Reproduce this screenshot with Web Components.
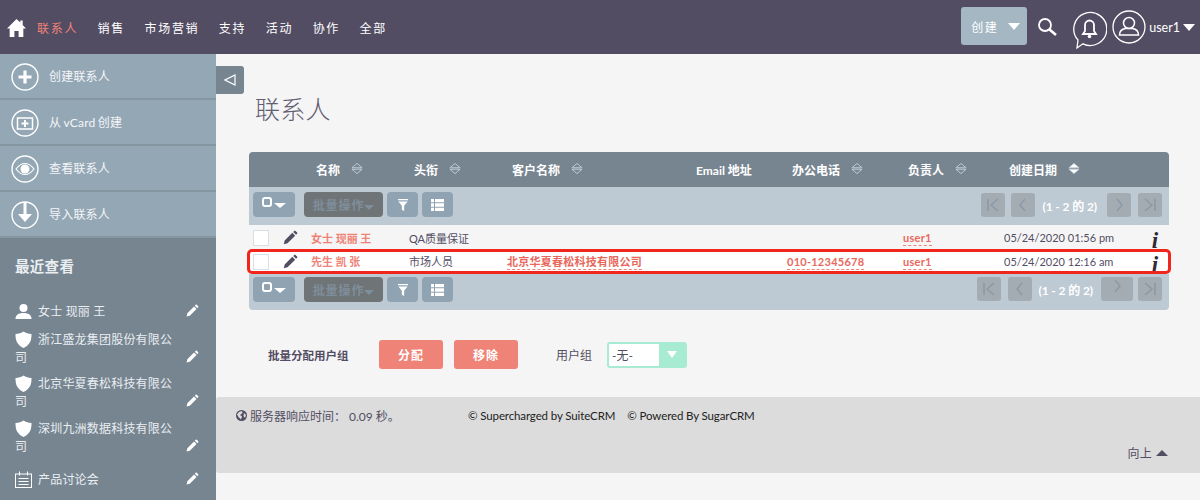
<!DOCTYPE html>
<html lang="zh">
<head>
<meta charset="utf-8">
<title>联系人</title>
<style>
  html, body { margin: 0; height: 500px; overflow: hidden; }
  body {
    font-family: Lato, "Noto Sans CJK SC", sans-serif;
    font-size: 12px;
    color: #534d64;
    background: #f5f5f5;
  }
  crm-app { height: 500px; }
</style>
</head>
<body>
<crm-app>
  <crm-topbar slot="top"></crm-topbar>
  <crm-sidebar slot="side">
    <crm-side-action icon="plus">创建联系人</crm-side-action>
    <crm-side-action icon="card">从 vCard 创建</crm-side-action>
    <crm-side-action icon="eye">查看联系人</crm-side-action>
    <crm-side-action icon="import">导入联系人</crm-side-action>
    <crm-recent-item slot="recent" icon="person">女士 现丽 王</crm-recent-item>
    <crm-recent-item slot="recent" icon="shield" style="margin-top:1px">浙江盛龙集团股份有限公司</crm-recent-item>
    <crm-recent-item slot="recent" icon="shield">北京华夏春松科技有限公司</crm-recent-item>
    <crm-recent-item slot="recent" icon="shield">深圳九洲数据科技有限公司</crm-recent-item>
    <crm-recent-item slot="recent" icon="calendar" style="margin-top:7px">产品讨论会</crm-recent-item>
  </crm-sidebar>
  <crm-contacts slot="main"></crm-contacts>
</crm-app>

<script>
const pencilPath = 'M2 16l1-4.2L11.6 3.2l3.2 3.2L6.2 15z M12.6 2.2l1.2-1.2a1 1 0 0 1 1.4 0l1.8 1.8a1 1 0 0 1 0 1.4l-1.2 1.2z';

const sideIcons = {
  plus: '<circle cx="14" cy="14" r="13" fill="none" stroke="#fff" stroke-width="1.4"/><path d="M14 7.5v13M7.5 14h13" stroke="#fff" stroke-width="3.2"/>',
  card: '<circle cx="14" cy="14" r="13" fill="none" stroke="#fff" stroke-width="1.4"/><rect x="6.5" y="9" width="15" height="11" fill="none" stroke="#fff" stroke-width="1.5"/><path d="M14 11v7M10.5 14.5h7" stroke="#fff" stroke-width="2"/>',
  eye: '<circle cx="14" cy="14" r="13" fill="none" stroke="#fff" stroke-width="1.4"/><path d="M5 14c3-4 6-5.5 9-5.5s6 1.500 9 5.500c-3 4-6 5.500-9 5.500S8 18 5 14z" fill="none" stroke="#fff" stroke-width="1.200"/><circle cx="14" cy="14" r="4.500" fill="#fff"/>',
  import: '<circle cx="14" cy="14" r="13" fill="none" stroke="#fff" stroke-width="1.4"/><path d="M14 1v13" stroke="#fff" stroke-width="3"/><path d="M7 13h14l-7 8z" fill="#fff"/>'
};

const recentIcons = {
  person: '<circle cx="8.500" cy="5" r="4" fill="#fff"/><path d="M0.500 16c0-4 3-6 8-6s8 2 8 6z" fill="#fff"/>',
  shield: '<path d="M8.500 0.500c2 1.500 5 2.500 8 2.500 0 6-1 10.500-8 14-7-3.500-8-8-8-14 3 0 6-1 8-2.500z" fill="#fff"/>',
  calendar: '<rect x="0.500" y="3" width="16" height="13.500" fill="none" stroke="#fff"/><path d="M4.500 0.500v4M12.500 0.500v4M3.500 7.500h10M3.500 10.500h10M3.500 13.500h10" stroke="#fff"/>'
};

class CrmApp extends HTMLElement {
  constructor() {
    super();
    this.attachShadow({ mode: 'open' });
    this.shadowRoot.innerHTML = `
      <style>
        :host {
          display: grid;
          grid-template-columns: 216px 1fr;
          grid-template-rows: 54px 1fr;
          overflow: hidden;
        }
        .top { grid-column: 1 / 3; }
      </style>
      <div class="top"><slot name="top"></slot></div>
      <slot name="side"></slot>
      <slot name="main"></slot>
    `;
  }
}

class CrmTopbar extends HTMLElement {
  constructor() {
    super();
    this.attachShadow({ mode: 'open' });
    const menu = ['销售', '市场营销', '支持', '活动', '协作', '全部'];
    this.shadowRoot.innerHTML = `
      <style>
        :host {
          display: flex;
          align-items: center;
          height: 54px;
          background: #534d64;
          color: #fff;
        }
        .home { margin: 2px 0 0 7px; display: block; }
        nav { display: flex; gap: 19.500px; margin-left: 11px; letter-spacing: 1.7px; font-size: 12px; }
        nav span { white-space: nowrap; }
        nav .active { color: #f08377; }
        .right { margin-left: auto; display: flex; align-items: center; }
        .create {
          width: 66px;
          height: 38px;
          margin-top: -2px;
          background: #a5b7c3;
          border-radius: 3px;
          display: flex;
          align-items: center;
          padding-left: 10px;
          gap: 10px;
          box-sizing: border-box;
          letter-spacing: 1.5px;
        }
        .caret { width: 0; height: 0; border: 6px solid transparent; border-top: 7px solid #fff; border-bottom: 0; }
        .search { margin: 0 0 0 10px; display: block; }
        .bell { margin: 6px 0 0 14px; display: block; }
        .user { margin: 0 0 0 5px; display: block; }
        .name { margin-left: 3px; font-size: 12.500px; }
        .right .caret.small { margin: 0 5px 0 3px; }
      </style>
      <svg class="home" width="19" height="20" viewBox="0 0 20 20" preserveAspectRatio="none">
        <path d="M10 1L0 10.500h2.800V19h5v-6h4.400v6h5v-8.500H20L16.500 7V2.500h-2.500v2z" fill="#fff"/>
      </svg>
      <nav><span class="active">联系人</span>${menu.map(m => `<span>${m}</span>`).join('')}</nav>
      <div class="right">
        <div class="create">创建<span class="caret"></span></div>
        <svg class="search" width="21" height="21" viewBox="0 0 21 21">
          <circle cx="8" cy="8" r="6" fill="none" stroke="#fff" stroke-width="1.800"/>
          <path d="M12.500 12.500l6.500 5.500" stroke="#fff" stroke-width="2.600"/>
        </svg>
        <svg class="bell" width="35" height="39" viewBox="0 0 35 39">
          <path d="M6 29a16.500 16.500 0 1 1 5 3.800L5 37z" fill="none" stroke="#fff" stroke-width="1.300"/>
          <path d="M17.500 9.500a4.500 4.500 0 0 1 4.500 4.500v6l2 3h-13l2-3v-6a4.500 4.500 0 0 1 4.500-4.500z" fill="none" stroke="#fff" stroke-width="1.800"/>
          <circle cx="17.500" cy="25.500" r="1.800" fill="#fff"/>
        </svg>
        <svg class="user" width="34" height="34" viewBox="0 0 34 34">
          <circle cx="17" cy="17" r="16" fill="none" stroke="#fff" stroke-width="1.300"/>
          <circle cx="17" cy="13" r="5.500" fill="none" stroke="#fff" stroke-width="1.500"/>
          <path d="M7.500 25c0-4 3-6 6-6.500h7c3 .5 6 2.500 6 6.500z" fill="none" stroke="#fff" stroke-width="1.500"/>
        </svg>
        <span class="name">user1</span>
        <span class="caret small"></span>
      </div>
    `;
  }
}

class CrmSidebar extends HTMLElement {
  constructor() {
    super();
    this.attachShadow({ mode: 'open' });
    this.shadowRoot.innerHTML = `
      <style>
        :host { display: block; background: #778591; color: #fff; height: 446px; overflow: hidden; }
        h2 { margin: 0; padding: 20px 15px 27px; font-size: 14.500px; line-height: 18px; font-weight: 700; color: #e9eef1; letter-spacing: .3px; }
        .recent { display: flex; flex-direction: column; gap: 8.500px; }
      </style>
      <slot></slot>
      <h2>最近查看</h2>
      <div class="recent"><slot name="recent"></slot></div>
    `;
  }
}

class CrmSideAction extends HTMLElement {
  constructor() {
    super();
    this.attachShadow({ mode: 'open' });
    this.shadowRoot.innerHTML = `
      <style>
        :host {
          display: flex;
          align-items: center;
          gap: 10px;
          height: 46px;
          box-sizing: border-box;
          padding: 0 0 2px 11px;
          background: #94a7b5;
          border-bottom: 2px solid #84969f;
          color: #f4f6f8;
          letter-spacing: .2px;
          word-spacing: -1px;
        }
        svg { display: block; flex: none; margin-top: 3px; }
      </style>
      <svg width="28" height="28" viewBox="0 0 28 28">${sideIcons[this.getAttribute('icon')]}</svg>
      <span><slot></slot></span>
    `;
  }
}

class CrmRecentItem extends HTMLElement {
  constructor() {
    super();
    this.attachShadow({ mode: 'open' });
    this.shadowRoot.innerHTML = `
      <style>
        :host {
          display: flex;
          align-items: flex-end;
          justify-content: space-between;
          padding: 0 17px 0 15px;
          color: #e9eef1;
          line-height: 18px;
          letter-spacing: .2px;
        }
        .text { width: 160px; }
        .text svg { vertical-align: -4px; margin-right: 6px; }
        .pen { display: block; flex: none; margin-bottom: 3px; }
      </style>
      <div class="text"><svg width="17" height="17" viewBox="0 0 17 17">${recentIcons[this.getAttribute('icon')]}</svg><slot></slot></div>
      <svg class="pen" width="14" height="14" viewBox="0 0 18 18"><path d="${pencilPath}" fill="#fff"/></svg>
    `;
  }
}

class CrmToolbar extends HTMLElement {
  constructor() {
    super();
    this.attachShadow({ mode: 'open' });
    const bottom = this.hasAttribute('bottom');
    this.shadowRoot.innerHTML = `
      <style>
        :host {
          display: flex;
          align-items: flex-start;
          height: ${bottom ? 36 : 38}px;
          box-sizing: border-box;
          padding: ${bottom ? 3 : 5}px 7px 0 4px;
          background: #bdc9d3;
          ${bottom ? 'border-radius: 0 0 4px 4px;' : ''}
        }
        .btn {
          height: 25px;
          background: #8fa3b3;
          border-radius: 4px;
          display: flex;
          align-items: center;
          justify-content: center;
          box-sizing: border-box;
          flex: none;
        }
        .check { width: 42px; gap: 2px; padding-bottom: 5px; }
        .box { width: 6px; height: 6px; border: 2px solid #fff; border-radius: 3px; }
        .caret { width: 0; height: 0; border: 5px solid transparent; border-top: 5px solid #fff; border-bottom: 0; margin-top: 5px; }
        .check .caret { border-width: 5px 6px 0; border-color: #fff transparent transparent; margin-top: 7px; }
        .bulk {
          width: 79px;
          margin-left: 9px;
          background: #6f7476;
          color: #7f8e9b;
          font-weight: 700;
          letter-spacing: .9px;
          gap: 0;
        }
        .bulk .caret { border-top-color: #7f8e9b; margin-top: 5px; }
        .icon { width: 31px; margin-left: 4px; }
        .pager { margin-left: auto; display: flex; align-items: center; color: #fff; font-weight: 700; }
        .pg { width: 24px; height: 24px; background: #a3acb3; border-radius: 3px; display: flex; align-items: center; justify-content: center; flex: none; }
        .pg + .pg { margin-left: ${bottom ? 7 : 6}px; }
        .count { margin: 0 ${bottom ? 8 : 10}px 0 ${bottom ? 6 : 7}px; white-space: nowrap; letter-spacing: -.1px; }
        .wide { width: 32px; align-items: flex-start; padding-top: 2px; box-sizing: border-box; }
        .count + .pg + .pg { margin-left: ${bottom ? 5 : 7}px; }
      </style>
      <div class="btn check"><span class="box"></span><span class="caret"></span></div>
      <div class="btn bulk">批量操作<span class="caret"></span></div>
      <div class="btn icon">
        <svg width="10" height="12" viewBox="0 0 13 14" preserveAspectRatio="none"><path d="M0 0h13v1.500H0z M0.500 3h12L8 8v6L5 12.500V8z" fill="#fff"/></svg>
      </div>
      <div class="btn icon">
        <svg width="13" height="12" viewBox="0 0 13 11" preserveAspectRatio="none"><path d="M0 0h3v3H0z M4 0h9v3H4z M0 4h3v3H0z M4 4h9v3H4z M0 8h3v3H0z M4 8h9v3H4z" fill="#fff"/></svg>
      </div>
      <div class="pager" style="margin-top:${bottom ? 0 : 1}px">
        <div class="pg"><svg width="14" height="14" viewBox="0 0 14 14"><path d="M2 1v12M12 1L5 7l7 6" fill="none" stroke="#8c98a3" stroke-width="1.500"/></svg></div>
        <div class="pg"><svg width="14" height="14" viewBox="0 0 14 14"><path d="M9 1L4 7l5 6" fill="none" stroke="#8c98a3" stroke-width="1.500"/></svg></div>
        <span class="count">(1 - 2 的 2)</span>
        <div class="pg ${bottom ? 'wide' : ''}"><svg width="14" height="14" viewBox="0 0 14 14"><path d="M5 1l5 6-5 6" fill="none" stroke="#8c98a3" stroke-width="1.500"/></svg></div>
        <div class="pg"><svg width="14" height="14" viewBox="0 0 14 14"><path d="M12 1v12M2 1l7 6-7 6" fill="none" stroke="#8c98a3" stroke-width="1.500"/></svg></div>
      </div>
    `;
  }
}

class CrmHeaderCell extends HTMLElement {
  constructor() {
    super();
    this.attachShadow({ mode: 'open' });
    const sort = this.getAttribute('sort');
    const fill = sort === 'active' ? '#fff' : 'none';
    const arrows = sort ? `<svg width="12" height="13" viewBox="0 0 13 13">
        <path d="M6.500 1L12 5.700H1z" fill="${fill}" stroke="#c6d0d8"/>
        <path d="M6.500 12L12 7.300H1z" fill="${fill}" stroke="#c6d0d8"/></svg>` : '';
    this.shadowRoot.innerHTML = `
      <style>
        :host { display: flex; align-items: center; gap: 11px; padding-left: 10px; color: #fff; font-weight: 700; white-space: nowrap; }
        svg { display: block; flex: none; margin-top: -2px; }
      </style>
      <span><slot></slot></span>${arrows}
    `;
  }
}

class CrmRow extends HTMLElement {
  constructor() {
    super();
    this.attachShadow({ mode: 'open' });
    const marked = this.hasAttribute('marked');
    this.shadowRoot.innerHTML = `
      <style>
        :host {
          display: grid;
          grid-template-columns: var(--cols);
          align-items: center;
          height: ${marked ? 25 : 24}px;
          background: #f5f5f5;
          color: #534d64;
          font-size: 11px;
          --cell-pad: ${marked ? 2 : 1}px;
          ${marked ? `
          margin: 0 -2px;
          padding: 0 2px;
          background: #fff;
          outline: 3px solid #f0261c;
          outline-offset: -3px;
          border-radius: 5px;` : ''}
        }
        .box { width: 14px; height: 14px; margin-left: 4px; background: #fff; border: 1px solid #d8e0e6; }
        .pen { display: block; margin-left: 3px; }
        .i { font: italic 700 23px/20px "Liberation Serif", serif; text-align: center; color: #2f2c38; padding: 6px 4px 0 0; }
      </style>
      <span class="box"></span>
      <svg class="pen" width="16" height="16" viewBox="0 0 18 18"><path d="${pencilPath}" fill="#534d64"/></svg>
      <slot></slot>
      <span class="i">i</span>
    `;
  }
}

class CrmCell extends HTMLElement {
  constructor() {
    super();
    this.attachShadow({ mode: 'open' });
    const kind = this.getAttribute('kind');
    const styleFor = {
      name: 'color:#f08377;font-weight:700;',
      link: 'color:#e8685c;font-weight:700;letter-spacing:.25px;border-bottom:1px dashed #f08377;'
    };
    this.shadowRoot.innerHTML = `
      <style>
        :host { display: block; padding: 0 0 var(--cell-pad) 5px; white-space: nowrap; }
        span { ${styleFor[kind] || ''} padding-bottom: 1px; }
      </style>
      <span><slot></slot></span>
    `;
  }
}

class CrmListView extends HTMLElement {
  constructor() {
    super();
    this.attachShadow({ mode: 'open' });
    this.shadowRoot.innerHTML = `
      <style>
        :host {
          display: block;
          width: 920px;
          --cols: 30px 27px 98px 98px 189px 91px 116px 101px 146px 24px;
        }
        .head {
          display: grid;
          grid-template-columns: var(--cols);
          align-items: center;
          height: 35px;
          background: #778591;
          border-radius: 4px 4px 0 0;
        }
        .email { padding-left: 5px; }
      </style>
      <div class="head">
        <span></span><span></span>
        <crm-header-cell sort="on">名称</crm-header-cell>
        <crm-header-cell sort="on">头衔</crm-header-cell>
        <crm-header-cell sort="on">客户名称</crm-header-cell>
        <crm-header-cell class="email">Email 地址</crm-header-cell>
        <crm-header-cell sort="on">办公电话</crm-header-cell>
        <crm-header-cell sort="on">负责人</crm-header-cell>
        <crm-header-cell sort="active">创建日期</crm-header-cell>
        <span></span>
      </div>
      <crm-toolbar></crm-toolbar>
      <crm-row>
        <crm-cell kind="name">女士 现丽 王</crm-cell>
        <crm-cell>QA质量保证</crm-cell>
        <crm-cell></crm-cell>
        <crm-cell></crm-cell>
        <crm-cell></crm-cell>
        <crm-cell kind="link">user1</crm-cell>
        <crm-cell>05/24/2020 01:56 pm</crm-cell>
      </crm-row>
      <crm-row marked>
        <crm-cell kind="name">先生 凯 张</crm-cell>
        <crm-cell>市场人员</crm-cell>
        <crm-cell kind="link">北京华夏春松科技有限公司</crm-cell>
        <crm-cell></crm-cell>
        <crm-cell kind="link">010-12345678</crm-cell>
        <crm-cell kind="link">user1</crm-cell>
        <crm-cell>05/24/2020 12:16 am</crm-cell>
      </crm-row>
      <crm-toolbar bottom></crm-toolbar>
    `;
  }
}

class CrmMassAssign extends HTMLElement {
  constructor() {
    super();
    this.attachShadow({ mode: 'open' });
    this.shadowRoot.innerHTML = `
      <style>
        :host { display: flex; align-items: center; height: 29px; padding-left: 52px; }
        b { width: 111px; color: #534d64; font-size: 11.500px; }
        .btn {
          width: 64px;
          height: 29px;
          background: #f08377;
          color: #fff;
          border-radius: 3px;
          display: flex;
          align-items: center;
          justify-content: center;
          font-weight: 700;
          letter-spacing: 1px;
          margin-right: 11px;
        }
        .label { margin-left: 27px; width: 51px; }
        .select {
          width: 80px;
          height: 26px;
          box-sizing: border-box;
          border: 2px solid #a8ebd3;
          border-radius: 3px;
          background: #fff;
          display: flex;
          align-items: center;
          padding-left: 3px;
        }
        .arrow {
          margin-left: auto;
          width: 26px;
          height: 100%;
          background: #a8ebd3;
          display: flex;
          align-items: center;
          justify-content: center;
        }
        .arrow i { width: 0; height: 0; border: 5.500px solid transparent; border-top: 7px solid #fff; border-bottom: 0; }
      </style>
      <b>批量分配用户组</b>
      <span class="btn">分配</span>
      <span class="btn">移除</span>
      <span class="label">用户组</span>
      <div class="select">-无-<span class="arrow"><i></i></span></div>
    `;
  }
}

class CrmFooter extends HTMLElement {
  constructor() {
    super();
    this.attachShadow({ mode: 'open' });
    this.shadowRoot.innerHTML = `
      <style>
        :host {
          display: block;
          height: 76px;
          box-sizing: border-box;
          background: #dcdcdc;
          padding: 9px 32px 0 20px;
          border-radius: 3px 0 0 3px;
        }
        .line { display: flex; align-items: center; height: 18px; }
        .time { display: flex; align-items: center; gap: 3px; width: 232px; color: #534d64; white-space: nowrap; }
        .copy { color: #222; font-size: 11.500px; letter-spacing: -.12px; white-space: nowrap; }
        .copy + .copy { margin-left: 12px; }
        svg { display: block; }
        .up { margin-top: 20px; display: flex; justify-content: flex-end; align-items: center; gap: 4px; letter-spacing: .3px; }
        .up i { width: 0; height: 0; border: 6px solid transparent; border-bottom: 6px solid #534d64; border-top: 0; }
      </style>
      <div class="line">
        <span class="time">
          <svg width="11" height="11" viewBox="0 0 11 11">
            <circle cx="5.500" cy="5.500" r="5.500" fill="#534d64"/>
            <path d="M3 2l3-1 .5 2L4 5l2 1.500-1 3L2.500 7 1 4.500z M8 3l2 2-1 3-1.500-2z" fill="#dcdcdc"/>
          </svg>
          服务器响应时间： 0.09 秒。
        </span>
        <span class="copy">© Supercharged by SuiteCRM</span>
        <span class="copy">© Powered By SugarCRM</span>
      </div>
      <div class="up">向上 <i></i></div>
    `;
  }
}

class CrmContacts extends HTMLElement {
  constructor() {
    super();
    this.attachShadow({ mode: 'open' });
    this.shadowRoot.innerHTML = `
      <style>
        :host { display: flex; flex-direction: column; position: relative; background: #f5f5f5; }
        .toggle {
          position: absolute;
          left: 0;
          top: 12px;
          width: 28px;
          height: 28px;
          background: #778591;
          border-radius: 0 3px 3px 0;
          display: flex;
          align-items: center;
          justify-content: center;
        }
        h1 {
          margin: 0;
          padding: 37px 0 0 39px;
          height: 61px;
          font-size: 25px;
          line-height: 36px;
          font-weight: 300;
          color: #625d72;
          letter-spacing: .3px;
        }
        crm-list-view { margin: 0 0 0 33px; }
        crm-mass-assign { margin-top: 30px; }
        crm-footer { margin-top: 28px; }
      </style>
      <div class="toggle">
        <svg width="12" height="12" viewBox="0 0 12 12"><path d="M11 1v10L1 6z" fill="none" stroke="#fff" stroke-width="1.200"/></svg>
      </div>
      <h1>联系人</h1>
      <crm-list-view></crm-list-view>
      <crm-mass-assign></crm-mass-assign>
      <crm-footer></crm-footer>
    `;
  }
}

customElements.define('crm-app', CrmApp);
customElements.define('crm-topbar', CrmTopbar);
customElements.define('crm-sidebar', CrmSidebar);
customElements.define('crm-side-action', CrmSideAction);
customElements.define('crm-recent-item', CrmRecentItem);
customElements.define('crm-toolbar', CrmToolbar);
customElements.define('crm-header-cell', CrmHeaderCell);
customElements.define('crm-row', CrmRow);
customElements.define('crm-cell', CrmCell);
customElements.define('crm-list-view', CrmListView);
customElements.define('crm-mass-assign', CrmMassAssign);
customElements.define('crm-footer', CrmFooter);
customElements.define('crm-contacts', CrmContacts);
</script>
</body>
</html>
